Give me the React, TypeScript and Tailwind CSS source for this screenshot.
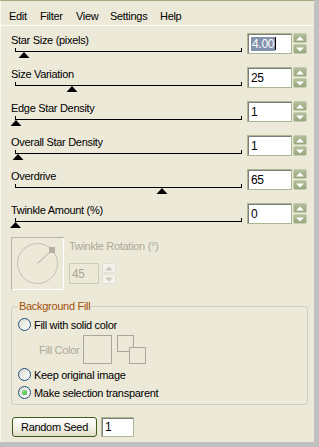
import React from "react";

type SliderRow = {
  label: string;
  value: string;
  thumb: number;
  selected?: boolean;
};

const rows: SliderRow[] = [
  { label: "Star Size (pixels)", value: "4.00", thumb: 24, selected: true },
  { label: "Size Variation", value: "25", thumb: 72 },
  { label: "Edge Star Density", value: "1", thumb: 16 },
  { label: "Overall Star Density", value: "1", thumb: 18 },
  { label: "Overdrive", value: "65", thumb: 162 },
  { label: "Twinkle Amount (%)", value: "0", thumb: 15.5 },
];

const menu = [
  { name: "Edit", w: "w-[31px]" },
  { name: "Filter", w: "w-[36px]" },
  { name: "View", w: "w-[34px]" },
  { name: "Settings", w: "w-[50px]" },
  { name: "Help", w: "w-[30px]" },
];

function Arrow({ up, color }: { up: boolean; color: string }) {
  return (
    <svg width="8" height="5" viewBox="0 0 8 5">
      <polygon points={up ? "0,4.5 4,0.5 8,4.5" : "0,0.5 4,4.5 8,0.5"} fill={color} />
    </svg>
  );
}

function Spinner({ disabled }: { disabled?: boolean }) {
  const btn = disabled
    ? "h-[10px] flex items-center justify-center rounded-[2px] border border-[#e2e0d4] bg-[#f3f2ec]"
    : "h-[10px] flex items-center justify-center rounded-[2px] border border-[#c3ccad] bg-[linear-gradient(#b3bf9c,#98a67d)]";
  const c = disabled ? "#cbc8bb" : "#ffffff";
  return (
    <div className="w-[14px] h-[21px] flex flex-col gap-[1px]">
      <div className={btn}>
        <Arrow up color={c} />
      </div>
      <div className={btn}>
        <Arrow up={false} color={c} />
      </div>
    </div>
  );
}

function Slider({ thumb }: { thumb: number }) {
  const c = thumb - 10;
  return (
    <svg width="236" height="12" className="block">
      <line x1="5" y1="4.5" x2="232" y2="4.5" stroke="#000" strokeWidth="1" />
      <line x1="5.5" y1="1" x2="5.5" y2="5" stroke="#000" strokeWidth="1" />
      <line x1="231.5" y1="1" x2="231.5" y2="5" stroke="#000" strokeWidth="1" />
      <polygon points={`${c - 5.5},11 ${c},5 ${c + 5.5},11`} fill="#000" />
    </svg>
  );
}

function Radio({ checked }: { checked?: boolean }) {
  return (
    <div className="w-[13px] h-[13px] rounded-full border border-[#1c5180] bg-[linear-gradient(135deg,#dcdad0,#ffffff)] flex items-center justify-center">
      {checked && (
        <div className="w-[5px] h-[5px] rounded-full bg-[radial-gradient(circle_at_35%_35%,#8fe38f,#21a121)]" />
      )}
    </div>
  );
}

export default function App() {
  return (
    <div className="w-[319px] h-[447px] bg-[#c0c0c0] font-['Liberation_Sans',Arial,sans-serif] text-[11px] leading-[14px] tracking-[-0.3px] text-black">
      <div className="w-[314px] h-[442px] bg-[#ece9d8] border-t border-[#a3ad80] shadow-[inset_1px_0_0_#f8f7f2] flex flex-col">
        {/* menu */}
        <div className="h-[24px] flex pl-[9px] pt-[8px]">
          {menu.map((m) => (
            <span key={m.name} className={m.w}>
              {m.name}
            </span>
          ))}
        </div>
        <div className="h-[1px] bg-[#fbfaf5]" />

        <div className="pt-[7px]">
          {rows.map((r) => (
            <div key={r.label} className="flex h-[34px]">
              <div className="ml-[10px] w-[236px] flex flex-col">
                <span className="pl-[1px] h-[14px]">{r.label}</span>
                <Slider thumb={r.thumb} />
              </div>
              <div className="ml-[1px] flex gap-[1px]">
                <div className="w-[45px] h-[21px] border border-[#aab792] bg-white shadow-[inset_1px_1px_0_#7d7d7d] flex items-center pl-[3px] text-[12px]">
                  {r.selected ? (
                    <>
                      <span className="bg-[#8493ad] text-white px-[1px]">{r.value}</span>
                      <span className="w-[1px] h-[13px] bg-black" />
                    </>
                  ) : (
                    <span>{r.value}</span>
                  )}
                </div>
                <Spinner />
              </div>
            </div>
          ))}
        </div>

        {/* twinkle rotation (disabled) */}
        <div className="flex h-[53px]">
          <div className="ml-[11px] w-[53px] h-[53px] border-t border-l border-[#b9b6a8] shadow-[inset_-1px_-1px_0_#ffffff]">
            <svg width="52" height="52">
              <circle cx="25.5" cy="25.5" r="20" fill="none" stroke="#c3c0b2" strokeWidth="1" />
              <line x1="25.5" y1="25.5" x2="40" y2="12" stroke="#aca899" strokeWidth="1" />
              <rect x="37" y="9" width="6" height="6" fill="#b3b0a3" />
            </svg>
          </div>
          <div className="ml-[5px] flex flex-col">
            <span className="mt-[2px] h-[14px] text-[#aca899]">Twinkle Rotation (°)</span>
            <div className="mt-[10px] flex gap-[3px]">
              <div className="w-[30px] h-[21px] border border-[#c9cfb5] bg-[#ece9d8] flex items-center pl-[2px] text-[12px] text-[#aca899]">
                45
              </div>
              <Spinner disabled />
            </div>
          </div>
        </div>

        {/* background fill */}
        <fieldset className="mt-[9px] ml-[11px] w-[297px] border border-[#d0cebf] rounded-[3px] pl-[6px] pb-[4px]">
          <legend className="px-[1px] text-[#a0500a] h-[14px]">Background Fill</legend>
          <div className="pt-[4px] flex flex-col">
            <div className="h-[15px] flex items-center gap-[3px]">
              <Radio />
              <span>Fill with solid color</span>
            </div>
            <div className="mt-[3px] h-[29px] flex items-center">
              <span className="ml-[21px] w-[44px] text-[#aca899]">Fill Color</span>
              <div className="w-[29px] h-[29px] border border-[#aca899]" />
              <div className="ml-[5px] w-[29px] h-[29px] relative">
                <div className="absolute left-0 top-0 w-[17px] h-[17px] border border-[#aca899]" />
                <div className="absolute left-[12px] top-[12px] w-[17px] h-[17px] border border-[#aca899] bg-[#ece9d8]" />
              </div>
            </div>
            <div className="mt-[3px] h-[15px] flex items-center gap-[3px]">
              <Radio />
              <span>Keep original image</span>
            </div>
            <div className="mt-[3px] h-[15px] flex items-center gap-[3px]">
              <Radio checked />
              <span>Make selection transparent</span>
            </div>
          </div>
        </fieldset>

        <div className="mt-[12px] flex">
          <button className="ml-[12px] w-[85px] h-[20px] rounded-[3px] border border-[#3d5a18] bg-[linear-gradient(#ffffff,#f1efe4_60%,#dedbc8)] text-[11px] leading-[14px] tracking-[-0.3px]">
            Random Seed
          </button>
          <div className="ml-[4px] w-[33px] h-[20px] border border-[#aab792] bg-white shadow-[inset_1px_1px_0_#7d7d7d] flex items-center pl-[3px] text-[12px]">
            1
          </div>
        </div>
      </div>
    </div>
  );
}
